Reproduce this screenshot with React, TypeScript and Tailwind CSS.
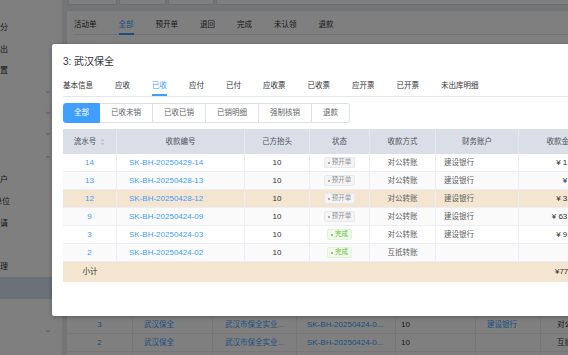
import React from "react";
import { ChevronDown, ChevronUp } from "lucide-react";

const sideItems = [
  { label: "积分", icon: "", h: "h-[22px]" },
  { label: "导出", icon: "", h: "h-[21px]" },
  { label: "设置", icon: "", h: "h-[21px]" },
  { label: "", icon: "down", h: "h-[21px]" },
  { label: "", icon: "down", h: "h-[21px]" },
  { label: "", icon: "down", h: "h-[22px]" },
  { label: "", icon: "up", h: "h-[23px]" },
  { label: "客户", icon: "", h: "h-[23px]" },
  { label: "单位", icon: "", h: "h-[22px]", wide: true },
  { label: "申请", icon: "", h: "h-[22px]" },
  { label: "", icon: "", h: "h-[22px]" },
  { label: "管理", icon: "", h: "h-[20px]" },
  { label: "", icon: "", h: "h-[22px]", sel: true },
  { label: "", icon: "", h: "h-[21px]" },
  { label: "", icon: "down", h: "h-[21px]" },
];

const rows = [
  { no: "14", code: "SK-BH-20250429-14", done: false, method: "对公转账", acct: "建设银行", amt: "¥ 1,500.00", bg: "bg-white" },
  { no: "13", code: "SK-BH-20250428-13", done: false, method: "对公转账", acct: "建设银行", amt: "¥ 800.00", bg: "bg-[#fafafa]" },
  { no: "12", code: "SK-BH-20250428-12", done: false, method: "对公转账", acct: "建设银行", amt: "¥ 3,000.00", bg: "bg-[#f3e5cf]" },
  { no: "9", code: "SK-BH-20250424-09", done: false, method: "对公转账", acct: "建设银行", amt: "¥ 63,000.00", bg: "bg-[#fafafa]" },
  { no: "3", code: "SK-BH-20250424-03", done: true, method: "对公转账", acct: "建设银行", amt: "¥ 9,500.00", bg: "bg-white" },
  { no: "2", code: "SK-BH-20250424-02", done: true, method: "互抵转账", acct: "", amt: "¥ 0.00", bg: "bg-[#fafafa]" },
];

const modalTabs = ["基本信息", "应收", "已收", "应付", "已付", "应收票", "已收票", "应开票", "已开票", "未出库明细"];
const pageTabs = ["活动单", "全部", "预开单", "退回", "完成", "未认领", "退款"];
const btns = ["已收未销", "已收已销", "已销明细", "强制核销", "退款"];

const gridCols = "grid grid-cols-[54px_128px_65px_60px_66px_83px_86px_80px]";

function SortIcon() {
  return (
    <svg width="5" height="8" viewBox="0 0 5 8" className="shrink-0">
      <path d="M2.5 0.5 L4.5 3 L0.5 3 Z" fill="#c0c4cc" />
      <path d="M2.5 7.5 L4.5 5 L0.5 5 Z" fill="#c0c4cc" />
    </svg>
  );
}

function Tag({ done }: { done: boolean }) {
  return done ? (
    <span className="inline-flex items-center h-[11px] px-[3px] gap-[2px] rounded-[2px] border border-[#e1f3d8] bg-[#f0f9eb] text-[#67c23a] text-[6.5px] leading-none">
      <span className="w-[2px] h-[2px] rounded-full bg-[#67c23a]" />
      完成
    </span>
  ) : (
    <span className="inline-flex items-center h-[11px] px-[3px] gap-[2px] rounded-[2px] border border-[#e9e9eb] bg-[#f4f4f5] text-[#909399] text-[6.5px] leading-none">
      <span className="w-[2px] h-[2px] rounded-full bg-[#909399]" />
      预开单
    </span>
  );
}

export default function App() {
  return (
    <div className="relative w-[568px] h-[355px] overflow-hidden flex bg-[#e8eaee] font-['Liberation_Sans','Noto_Sans_CJK_SC',sans-serif] text-[#303133]">
      {/* sidebar */}
      <aside className="w-[62px] shrink-0 bg-white flex flex-col pt-[17px] text-[8px]">
        {sideItems.map((it, i) => (
          <div key={i} className={`${it.h} shrink-0 flex items-center justify-between pr-[10px] ${it.sel ? "bg-[#d9e1ee]" : ""}`}>
            <div className={`${it.wide ? "w-[10px]" : "w-[8px]"} flex justify-end overflow-visible`}>
              <span className="whitespace-nowrap shrink-0 text-[#303133]">{it.label}</span>
            </div>
            {it.icon === "down" && <ChevronDown size={8} strokeWidth={2} color="#909399" />}
            {it.icon === "up" && <ChevronUp size={8} strokeWidth={2} color="#909399" />}
          </div>
        ))}
      </aside>

      {/* main */}
      <main className="flex-1 flex flex-col min-w-0">
        <div className="flex gap-[2px] pl-[6px] h-[5px] shrink-0">
          <div className="w-[49px] bg-white border-x border-b border-[#dcdfe6] rounded-b-[2px]" />
          <div className="w-[47px] bg-white border-x border-b border-[#dcdfe6] rounded-b-[2px]" />
          <div className="w-[46px] bg-white border-x border-b border-[#dcdfe6] rounded-b-[2px]" />
          <div className="flex-1 bg-white border-l border-b border-[#dcdfe6] rounded-bl-[2px]" />
        </div>
        <div className="mt-[5px] ml-[4px] flex-1 bg-white border-l border-t border-[#e4e7ed] flex flex-col">
          <div className="pt-[4px] pl-[7px]">
            <div className="flex gap-[22px] h-[20px] border-b border-[#e4e7ed] text-[7.5px]">
              {pageTabs.map((t) => (
                <div key={t} className={`h-[20px] flex items-center ${t === "全部" ? "text-[#409eff] shadow-[inset_0_-2px_0_#409eff]" : "text-[#303133]"}`}>
                  {t}
                </div>
              ))}
            </div>
          </div>
          <div className="h-[281px] shrink-0" />
          <div className="text-[8px]">
            {[
              { no: "3", m: "对公转账", acct: "建设银行" },
              { no: "2", m: "互抵转账", acct: "" },
              { no: "1", m: "对公转账", acct: "建设银行" },
            ].map((r) => (
              <div key={r.no} className="grid grid-cols-[66px_80px_84px_99px_80px_65px_60px] h-[18px] border-b border-[#ebeef5]">
                <div className="flex items-center justify-center border-r border-[#ebeef5] text-[#409eff]">{r.no}</div>
                <div className="flex items-center pl-[11px] border-r border-[#ebeef5] text-[#409eff] text-[7.5px]">武汉保全</div>
                <div className="flex items-center pl-[12px] border-r border-[#ebeef5] text-[#409eff] text-[7.5px] whitespace-nowrap">武汉市保全实业...</div>
                <div className="flex items-center pl-[10px] border-r border-[#ebeef5] text-[#409eff] whitespace-nowrap">SK-BH-20250424-0...</div>
                <div className="flex items-center pl-[5px] border-r border-[#ebeef5]">10</div>
                <div className="flex items-center pl-[11px] border-r border-[#ebeef5] text-[#409eff] text-[7.5px]">{r.acct}</div>
                <div className="flex items-center pl-[16px] text-[7.5px] whitespace-nowrap">{r.m}</div>
              </div>
            ))}
          </div>
        </div>
      </main>

      {/* overlay */}
      <div className="absolute inset-0 bg-black/50" />

      {/* modal */}
      <div className="absolute left-[52px] top-[44px] w-[560px] h-[272px] bg-white rounded-[2px] shadow-[0_1px_4px_rgba(0,0,0,0.3)] pl-[11px] pt-[12px] flex flex-col">
        <div className="h-[12px] leading-[12px] text-[10px] text-[#303133]">3: 武汉保全</div>
        <div className="mt-[8px] flex gap-[22px] h-[21px] border-b border-[#e4e7ed] text-[7.5px]">
          {modalTabs.map((t) => (
            <div key={t} className={`h-[20px] flex items-center ${t === "已收" ? "text-[#409eff] shadow-[inset_0_-2px_0_#409eff]" : "text-[#303133]"}`}>
              {t}
            </div>
          ))}
        </div>
        <div className="mt-[6px] flex h-[20px] text-[7.5px]">
          <div className="px-[10px] flex items-center bg-[#409eff] text-white border border-[#409eff] rounded-l-[3px]">全部</div>
          {btns.map((b, i) => (
            <div key={b} className={`px-[11px] flex items-center text-[#606266] border-y border-r border-[#dcdfe6] ${i === btns.length - 1 ? "rounded-r-[3px]" : ""}`}>
              {b}
            </div>
          ))}
        </div>
        <div className="mt-[6px] text-[7.5px] overflow-hidden">
          <div className={`${gridCols} h-[25px] bg-[#d9dee7] text-[#4f5259]`}>
            <div className="flex items-center justify-center gap-[4px] border-r border-[#e6e9ef]">
              <span>流水号</span>
              <SortIcon />
            </div>
            <div className="flex items-center justify-center border-r border-[#e6e9ef]">收款编号</div>
            <div className="flex items-center justify-center border-r border-[#e6e9ef]">己方抬头</div>
            <div className="flex items-center justify-center border-r border-[#e6e9ef]">状态</div>
            <div className="flex items-center justify-center border-r border-[#e6e9ef]">收款方式</div>
            <div className="flex items-center justify-center border-r border-[#e6e9ef]">财务账户</div>
            <div className="flex items-center justify-center border-r border-[#e6e9ef]">收款金额</div>
            <div />
          </div>
          {rows.map((r) => (
            <div key={r.no} className={`${gridCols} h-[18px] border-b border-[#ebeef5] ${r.bg}`}>
              <div className="flex items-center justify-center border-r border-[#ebeef5] text-[8px] text-[#409eff]">{r.no}</div>
              <div className="flex items-center pl-[12px] border-r border-[#ebeef5] text-[8px] text-[#409eff] whitespace-nowrap">{r.code}</div>
              <div className="flex items-center justify-center border-r border-[#ebeef5] text-[8px] text-[#303133]">10</div>
              <div className="flex items-center justify-center border-r border-[#ebeef5]">
                <Tag done={r.done} />
              </div>
              <div className="flex items-center justify-center border-r border-[#ebeef5] text-[#606266]">{r.method}</div>
              <div className="flex items-center pl-[8px] border-r border-[#ebeef5] text-[#606266]">{r.acct}</div>
              <div className="flex items-center justify-end pr-[10px] border-r border-[#ebeef5] text-[8px] text-[#303133] whitespace-nowrap">{r.amt}</div>
              <div />
            </div>
          ))}
          <div className={`${gridCols} h-[20px] bg-[#f3e5cf]`}>
            <div className="flex items-center justify-center text-[#303133]">小计</div>
            <div />
            <div />
            <div />
            <div />
            <div />
            <div className="flex items-center justify-end pr-[10px] text-[8px] text-[#303133] whitespace-nowrap">¥77,800.00</div>
            <div />
          </div>
        </div>
      </div>
    </div>
  );
}
